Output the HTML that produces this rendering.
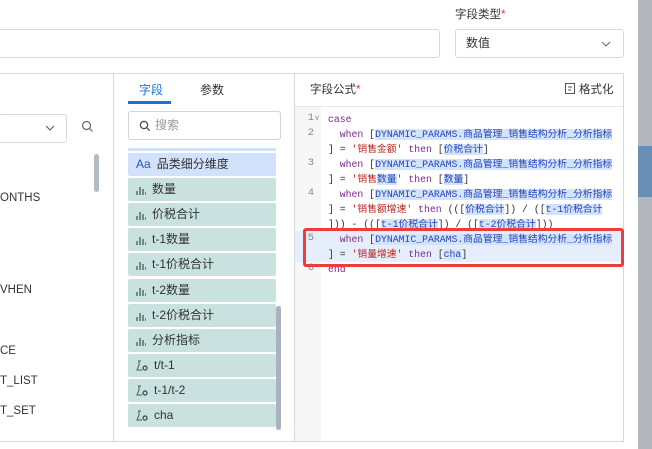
<!DOCTYPE html>
<html><head><meta charset="utf-8"><style>
*{box-sizing:border-box;margin:0;padding:0}
body{width:652px;height:449px;overflow:hidden;background:#fff;position:relative;font-family:"Liberation Sans","Noto Sans CJK SC",sans-serif;color:#333;font-size:12px}
.a{position:absolute}
.card{position:absolute;left:128px;width:148px;height:23px;background:#c9e2e0;border-radius:2px;font-size:12px;line-height:23px;padding-left:8px;color:#333}
.ln{position:absolute;left:300px;width:14px;text-align:right;color:#888;font-family:"Liberation Mono",monospace;font-size:10.5px}
.cd{position:absolute;left:328px;white-space:pre;font-family:"Liberation Mono","Noto Sans CJK SC",monospace;font-size:9.8px;line-height:15px;color:#333}
.k{color:#7a2a8a}.s{color:#b5261e}.h{background:#d3e3fb;color:#2444b8}
.bar{display:inline-block;vertical-align:middle;margin-right:6px}
</style></head><body>
<div class="a" style="left:455px;top:6px;font-size:11.5px;color:#333">字段类型<span style="color:#e33">*</span></div>
<div class="a" style="left:-2px;top:29px;width:442px;height:29px;border:1px solid #d7d9de;border-radius:3px"></div>
<div class="a" style="left:455px;top:29px;width:169px;height:29px;border:1px solid #d7d9de;border-radius:3px;padding:0 10px;line-height:27px;font-size:12px">数值<svg class="a" style="right:12px;top:11px" width="10" height="6"><path d="M1 1l4 4 4-4" stroke="#666" fill="none"/></svg></div>
<div class="a" style="left:-2px;top:73px;width:626px;height:369px;border:1px solid #d7d9de"></div>
<div class="a" style="left:113px;top:73px;width:1px;height:369px;background:#d7d9de"></div>
<div class="a" style="left:294px;top:73px;width:1px;height:369px;background:#d7d9de"></div>
<div class="a" style="left:295px;top:106px;width:328px;height:1px;background:#e4e6ea"></div>
<div class="a" style="left:-2px;top:114px;width:69px;height:29px;border:1px solid #d7d9de;border-radius:3px"></div>
<svg class="a" style="left:45px;top:125px" width="10" height="6"><path d="M1 1l4 4 4-4" stroke="#555" fill="none"/></svg>
<svg class="a" style="left:81px;top:120px" width="13" height="13"><circle cx="5.5" cy="5.5" r="4" stroke="#666" fill="none" stroke-width="1.2"/><path d="M8.5 8.5l3 3" stroke="#666" stroke-width="1.2"/></svg>
<div class="a" style="left:94px;top:154px;width:5px;height:38px;background:#b3bac4;border-radius:3px"></div>
<div class="a" style="left:0;top:192px;font-size:11.5px">ONTHS</div>
<div class="a" style="left:0;top:284px;font-size:11.5px">VHEN</div>
<div class="a" style="left:0;top:345px;font-size:11.5px">CE</div>
<div class="a" style="left:0;top:375px;font-size:11.5px">T_LIST</div>
<div class="a" style="left:0;top:405px;font-size:11.5px">T_SET</div>
<div class="a" style="left:139px;top:81px;color:#1f6fd6;font-size:12px">字段</div>
<div class="a" style="left:200px;top:81px;font-size:12px">参数</div>
<div class="a" style="left:128px;top:101px;width:43px;height:3px;background:#1f6fd6"></div>
<div class="a" style="left:128px;top:111px;width:153px;height:29px;border:1px solid #d0d3d8;border-radius:3px;padding-left:26px;line-height:27px;color:#999">搜索</div>
<svg class="a" style="left:139px;top:120px" width="12" height="12"><circle cx="5" cy="5" r="3.6" stroke="#444" fill="none" stroke-width="1.2"/><path d="M7.7 7.7l3 3" stroke="#444" stroke-width="1.2"/></svg>
<div class="a" style="left:128px;top:148px;width:148px;height:3px;background:#d3e2fb"></div>
<div class="card" style="top:153px;background:#d3e2fb"><span style="color:#2a55b0;margin-right:6px">Aa</span>品类细分维度</div>
<div class="card" style="top:178px"><svg class="bar" width="10" height="10"><path d="M1 10V6M4 10V2M7 10V4M10 10V7" stroke="#3a5e55" stroke-width="1.3"/></svg>数量</div>
<div class="card" style="top:203px"><svg class="bar" width="10" height="10"><path d="M1 10V6M4 10V2M7 10V4M10 10V7" stroke="#3a5e55" stroke-width="1.3"/></svg>价税合计</div>
<div class="card" style="top:228px"><svg class="bar" width="10" height="10"><path d="M1 10V6M4 10V2M7 10V4M10 10V7" stroke="#3a5e55" stroke-width="1.3"/></svg>t-1数量</div>
<div class="card" style="top:253px"><svg class="bar" width="10" height="10"><path d="M1 10V6M4 10V2M7 10V4M10 10V7" stroke="#3a5e55" stroke-width="1.3"/></svg>t-1价税合计</div>
<div class="card" style="top:279px"><svg class="bar" width="10" height="10"><path d="M1 10V6M4 10V2M7 10V4M10 10V7" stroke="#3a5e55" stroke-width="1.3"/></svg>t-2数量</div>
<div class="card" style="top:304px"><svg class="bar" width="10" height="10"><path d="M1 10V6M4 10V2M7 10V4M10 10V7" stroke="#3a5e55" stroke-width="1.3"/></svg>t-2价税合计</div>
<div class="card" style="top:329px"><svg class="bar" width="10" height="10"><path d="M1 10V6M4 10V2M7 10V4M10 10V7" stroke="#3a5e55" stroke-width="1.3"/></svg>分析指标</div>
<div class="card" style="top:354px"><svg class="bar" width="12" height="11"><path d="M2 1h3M3 1v4L1 10h5" stroke="#3a5e55" fill="none"/><circle cx="9" cy="8" r="2" stroke="#3a5e55" fill="none" stroke-width="1.4"/></svg>t/t-1</div>
<div class="card" style="top:379px"><svg class="bar" width="12" height="11"><path d="M2 1h3M3 1v4L1 10h5" stroke="#3a5e55" fill="none"/><circle cx="9" cy="8" r="2" stroke="#3a5e55" fill="none" stroke-width="1.4"/></svg>t-1/t-2</div>
<div class="card" style="top:404px"><svg class="bar" width="12" height="11"><path d="M2 1h3M3 1v4L1 10h5" stroke="#3a5e55" fill="none"/><circle cx="9" cy="8" r="2" stroke="#3a5e55" fill="none" stroke-width="1.4"/></svg>cha</div>
<div class="a" style="left:276px;top:306px;width:5px;height:124px;background:#a9b2bd;border-radius:3px"></div>
<div class="a" style="left:310px;top:81px;font-size:11.5px">字段公式<span style="color:#e33">*</span></div>
<svg class="a" style="left:565px;top:83px" width="10" height="11"><rect x="0.5" y="0.5" width="9" height="10" stroke="#555" fill="none"/><path d="M3 4h4M3 7h3" stroke="#555"/></svg>
<div class="a" style="left:579px;top:81px;font-size:11.5px">格式化</div>
<div class="a" style="left:295px;top:107px;width:26px;height:334px;background:#f7f7f7"></div>
<div class="a" style="left:295px;top:231px;width:326px;height:31px;background:#e6eefb"></div>
<div class="ln" style="top:112px">1</div><div class="a" style="left:315px;top:113px;font-size:8px;color:#888">v</div>
<div class="ln" style="top:127px">2</div>
<div class="ln" style="top:157px">3</div>
<div class="ln" style="top:187px">4</div>
<div class="ln" style="top:232px">5</div>
<div class="ln" style="top:262px">6</div>
<div class="cd" style="top:112px"><span class="k">case</span>
  <span class="k">when</span> [<span class="h">DYNAMIC_PARAMS.商品管理_销售结构分析_分析指标</span>
] = <span class="s">'销售金额'</span> <span class="k">then</span> [<span class="h">价税合计</span>]
  <span class="k">when</span> [<span class="h">DYNAMIC_PARAMS.商品管理_销售结构分析_分析指标</span>
] = <span class="s">'销售</span><span class="h">数量</span><span class="s">'</span> <span class="k">then</span> [<span class="h">数量</span>]
  <span class="k">when</span> [<span class="h">DYNAMIC_PARAMS.商品管理_销售结构分析_分析指标</span>
] = <span class="s">'销售额增速'</span> <span class="k">then</span> (([<span class="h">价税合计</span>]) / ([<span class="h">t-1价税合计</span>
])) - (([<span class="h">t-1价税合计</span>]) / ([<span class="h">t-2价税合计</span>]))
  <span class="k">when</span> [<span class="h">DYNAMIC_PARAMS.商品管理_销售结构分析_分析指标</span>
] = <span class="s">'销量增速'</span> <span class="k">then</span> [<span class="h">cha</span>]
<span class="k">end</span></div>
<div class="a" style="left:303px;top:228px;width:321px;height:39px;border:3px solid #ee3b3b;border-radius:3px"></div>
<div class="a" style="left:638px;top:0;width:14px;height:449px;background:#b3b6bb"></div>
<div class="a" style="left:638px;top:146px;width:14px;height:51px;background:#6a8fb5"></div>
</body></html>
